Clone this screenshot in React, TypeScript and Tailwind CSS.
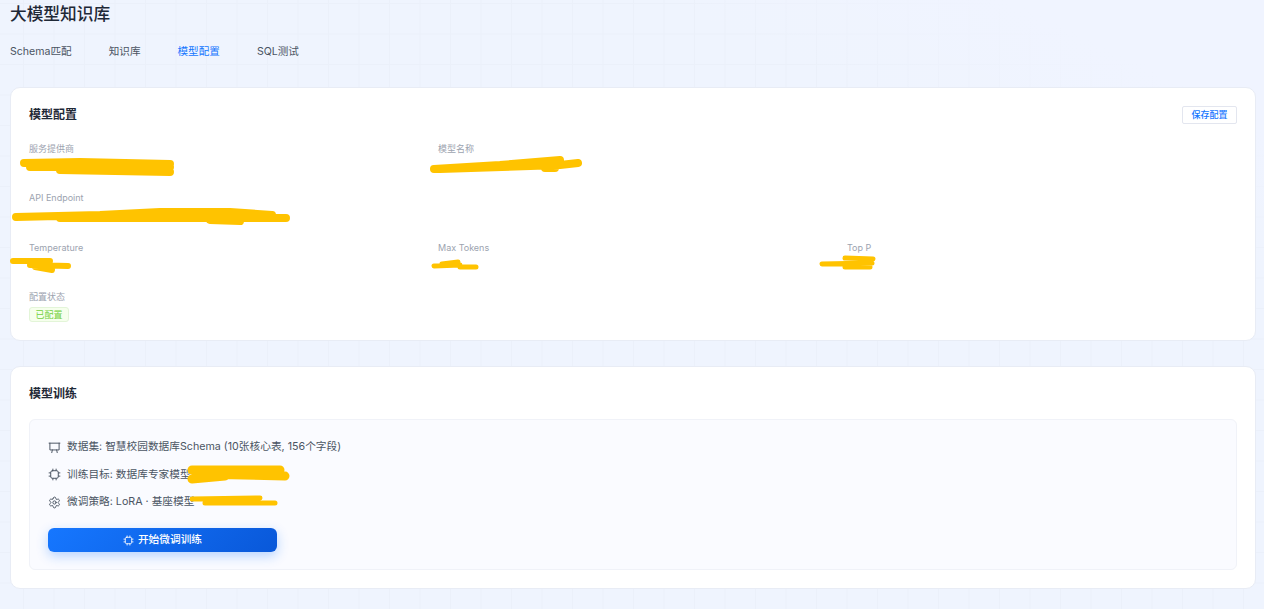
import React from 'react';
import { Settings } from 'lucide-react';

const tabs = ['Schema匹配', '知识库', '模型配置', 'SQL测试'];

// 遮挡涂抹（页面坐标）
const scribbles = [
  { w: 8, d: 'M24 163 L80 162 L170 164 M30 167 L170 167 M60 170 L170 172' },
  { w: 8, d: 'M16 217 L100 215 L160 212 L230 212 L272 215 M60 218 L286 218 M210 220 L240 221' },
  { w: 6, d: 'M13 261 L50 261 M30 265 L68 266 M35 267 L52 270' },
  { w: 8, d: 'M434 169 L500 165 L560 160 M440 169 L560 165 L578 163 M545 168 L555 168' },
  { w: 5, d: 'M434 266 L460 265 M442 264 L458 262 M460 267 L476 267' },
  { w: 5, d: 'M822 264 L872 263 M845 258 L873 259 M845 267 L870 267' },
  { w: 9, d: 'M192 470 L280 470 M196 474 L285 476 M192 479 L225 476' },
  { w: 5, d: 'M192 499 L260 498 M205 503 L275 503' },
];

function Field({ label, children }: { label: string; children?: React.ReactNode }) {
  return (
    <div className="h-[49.3px]">
      <div className="text-[9px] leading-[14px] text-[#9ca3af]">{label}</div>
      {children}
    </div>
  );
}

function BoardIcon() {
  return (
    <svg width="13" height="13" viewBox="0 0 24 24" fill="none" stroke="#4b5563" strokeWidth="1.800" strokeLinecap="round" strokeLinejoin="round" className="shrink-0">
      <path d="M2 4h20M3.500 4v12.500h17V4M8 16.500l-1 5M16 16.500l1 5" />
    </svg>
  );
}

function ChipIcon({ size = 13 }: { size?: number }) {
  return (
    <svg width={size} height={size} viewBox="0 0 24 24" fill="none" stroke="currentColor" strokeWidth="1.800" strokeLinecap="round" strokeLinejoin="round" className="shrink-0">
      <rect x="5" y="5" width="14" height="14" rx="3" />
      <path d="M9 2v3M15 2v3M9 19v3M15 19v3M2 9h3M2 15h3M19 9h3M19 15h3" />
    </svg>
  );
}

export default function App() {
  return (
    <div className="relative h-[609px] w-[1264px] overflow-hidden bg-[#eff4fe] bg-[linear-gradient(to_bottom_left,#f0f4ff_10%,transparent_24%),linear-gradient(#ebf0fa_1px,transparent_1px),linear-gradient(90deg,#ebf0fa_1px,transparent_1px)] bg-[size:100%_100%,30.5px_30.5px,30.5px_30.5px] bg-[position:0_0,23px_3px,23px_3px] pl-[10px] pr-[8px] font-['Inter','Noto_Sans_CJK_SC',sans-serif]">
      <h1 className="pt-[4px] text-[16.7px] font-medium leading-[21px] text-[#1f2937]">大模型知识库</h1>

      <nav className="mt-[17px] flex gap-[37px] text-[10.600px] leading-[20px] text-[#4b5563]">
        {tabs.map((t) => (
          <span key={t} className={t === '模型配置' ? 'text-[#1677ff]' : ''}>{t}</span>
        ))}
      </nav>

      <section className="mt-[25px] h-[254px] rounded-[10px] border border-[#e8ecf5] bg-white px-[18px] pt-[17px]">
        <div className="flex h-[19px] items-center justify-between">
          <h2 className="text-[12px] font-semibold text-[#1f2937]">模型配置</h2>
          <button className="h-[18px] w-[55px] rounded-[2px] border border-[#e3e6ef] bg-white text-[9px] font-medium text-[#1677ff]">保存配置</button>
        </div>
        <div className="mt-[18px] grid grid-cols-3 gap-x-[19px]">
          <Field label="服务提供商" />
          <Field label="模型名称" />
          <div />
          <div className="col-span-3"><Field label="API Endpoint" /></div>
          <Field label="Temperature" />
          <Field label="Max Tokens" />
          <Field label="Top P" />
          <div className="col-span-3">
            <Field label="配置状态">
              <span className="mt-[3px] flex h-[15px] w-[40px] items-center justify-center rounded-[3px] border border-[#e3f5d8] bg-[#f6ffed] text-[9px] text-[#73d13d]">已配置</span>
            </Field>
          </div>
        </div>
      </section>

      <section className="mt-[25px] h-[223px] rounded-[10px] border border-[#e8ecf5] bg-white px-[18px] pt-[17px]">
        <h2 className="text-[12px] font-semibold leading-[19px] text-[#1f2937]">模型训练</h2>
        <div className="mt-[16px] h-[151px] rounded-[6px] border border-[#f0f2f8] bg-[#fafbff] px-[18px] pt-[17px]">
          <ul className="flex flex-col gap-[7.500px] text-[10.700px] leading-[20px] text-[#4b5563]">
            <li className="flex items-center gap-[6px]"><BoardIcon />数据集: 智慧校园数据库Schema (10张核心表, 156个字段)</li>
            <li className="flex items-center gap-[6px]"><ChipIcon />训练目标: 数据库专家模型</li>
            <li className="flex items-center gap-[6px]"><Settings size={13} strokeWidth={1.8} className="shrink-0" />微调策略: LoRA · 基座模型</li>
          </ul>
          <button className="mt-[16px] flex h-[24px] w-[229px] items-center justify-center gap-[4px] rounded-[6px] bg-[linear-gradient(135deg,#1677ff,#0958d9)] text-[10.700px] font-medium text-white shadow-[0_4px_12px_rgba(22,119,255,0.3)]">
            <ChipIcon size={11} />开始微调训练
          </button>
        </div>
      </section>

      <svg className="pointer-events-none absolute inset-0" width="1264" height="609" fill="none" stroke="#ffc300" strokeLinecap="round" strokeLinejoin="round">
        {scribbles.map((s, i) => <path key={i} d={s.d} strokeWidth={s.w} />)}
      </svg>
    </div>
  );
}
